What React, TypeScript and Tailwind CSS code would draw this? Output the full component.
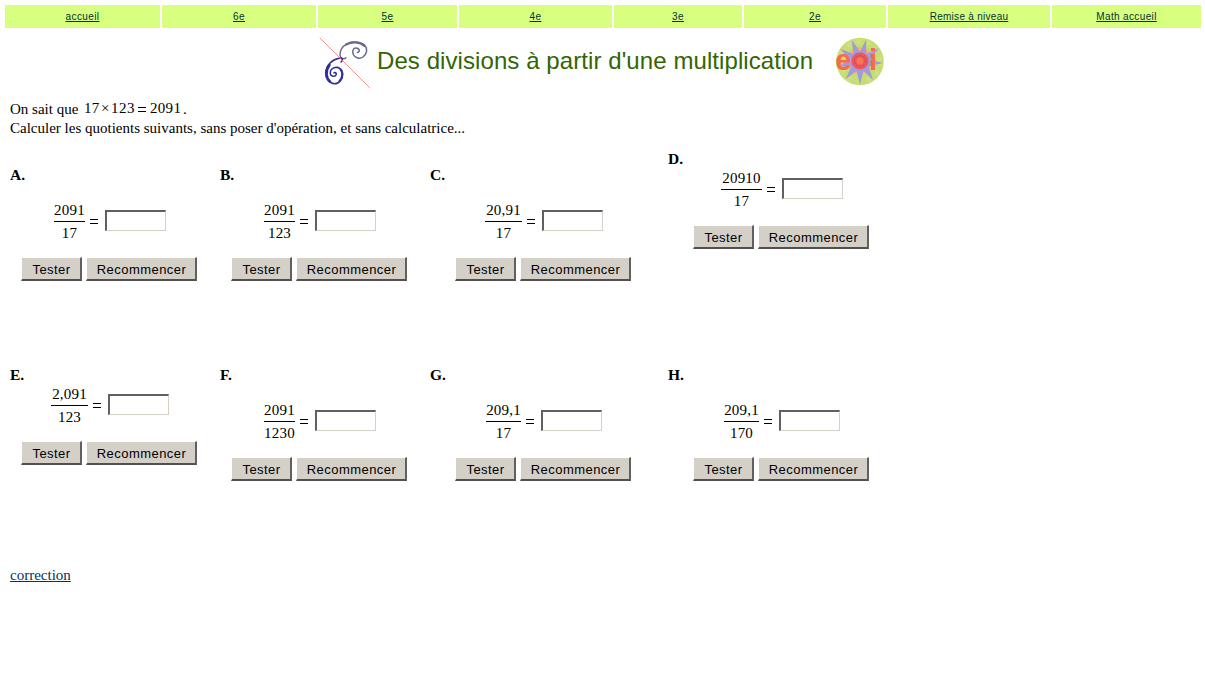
import React from "react";

const nav = [
  { label: "accueil", w: "w-[155px]", ls: "tracking-[0.4px]" },
  { label: "6e", w: "w-[154px]", ls: "tracking-[0.4px]" },
  { label: "5e", w: "w-[139px]", ls: "tracking-[0.4px]" },
  { label: "4e", w: "w-[153px]", ls: "tracking-[0.4px]" },
  { label: "3e", w: "w-[128px]", ls: "tracking-[0.4px]" },
  { label: "2e", w: "w-[142px]", ls: "tracking-[0.4px]" },
  { label: "Remise à niveau", w: "w-[162px]", ls: "tracking-[0.28px]" },
  { label: "Math accueil", w: "w-[149px]", ls: "tracking-[0.36px]" },
];

type Exercise = {
  id: string;
  num: string;
  den: string;
  gap: string;
  top: string;
  fracPad: string;
  btnPad: string;
  bar: string;
};

const exercises: Exercise[] = [
  { id: "A", num: "2091", den: "17", top: "pt-4", gap: "pt-4", fracPad: "pl-11", btnPad: "pl-[11px]", bar: "w-[31px]" },
  { id: "B", num: "2091", den: "123", top: "pt-4", gap: "pt-4", fracPad: "pl-11", btnPad: "pl-[11px]", bar: "w-[31px]" },
  { id: "C", num: "20,91", den: "17", top: "pt-4", gap: "pt-4", fracPad: "pl-[55px]", btnPad: "pl-[25px]", bar: "w-[37px]" },
  { id: "D", num: "20910", den: "17", top: "pt-0", gap: "pt-0", fracPad: "pl-[53px]", btnPad: "pl-[25px]", bar: "w-[41px]" },
  { id: "E", num: "2,091", den: "123", top: "pt-4", gap: "pt-0", fracPad: "pl-[41px]", btnPad: "pl-[11px]", bar: "w-[37px]" },
  { id: "F", num: "2091", den: "1230", top: "pt-4", gap: "pt-4", fracPad: "pl-11", btnPad: "pl-[11px]", bar: "w-[31px]" },
  { id: "G", num: "209,1", den: "17", top: "pt-4", gap: "pt-4", fracPad: "pl-14", btnPad: "pl-[25px]", bar: "w-[35px]" },
  { id: "H", num: "209,1", den: "170", top: "pt-4", gap: "pt-4", fracPad: "pl-14", btnPad: "pl-[25px]", bar: "w-[35px]" },
];

function ClassicButton({ label, w }: { label: string; w: string }) {
  return (
    <button
      className={`${w} h-6 border-t border-l border-r-2 border-b-2 border-t-white border-l-white border-r-[#606060] border-b-[#505050] bg-[#d4d0c8] pt-[2px] pl-px text-center font-['Liberation_Sans',sans-serif] text-[13px] leading-[19px] tracking-[0.45px] whitespace-nowrap text-black`}
    >
      {label}
    </button>
  );
}

function Equals() {
  return (
    <svg className="shrink-0" width="9" height="5" viewBox="0 0 9 5" shapeRendering="crispEdges">
      <path d="M1 0.5H9M1 4.5H9" stroke="#000" />
    </svg>
  );
}

function ExerciseCell({ ex }: { ex: Exercise }) {
  return (
    <div className={ex.top}>
      <div className="h-[19px] text-[15.5px] leading-[17px] font-bold">{ex.id}.</div>
      <div className={ex.gap}>
        <div className={`flex h-10 items-start ${ex.fracPad}`}>
          <div className={`${ex.bar} flex flex-col items-center text-[15px] tracking-[0.2px]`}>
            <span className="h-5 leading-[18px]">{ex.num}</span>
            <span className="h-px w-full bg-black" />
            <span className="h-[19px] leading-[22px]">{ex.den}</span>
          </div>
          <div className="flex pt-[18px] pl-1">
            <Equals />
          </div>
          <input
            aria-label={ex.id}
            className="mt-[9px] ml-[7px] h-[21px] w-[61px] border-t-2 border-r border-b border-l-2 border-t-[#606060] border-r-[#d4d0c8] border-b-[#d4d0c8] border-l-[#606060] bg-white outline-none"
          />
        </div>
        <div className={`flex gap-1 pt-4 ${ex.btnPad}`}>
          <ClassicButton label="Tester" w="w-[61px]" />
          <ClassicButton label="Recommencer" w="w-[111px]" />
        </div>
      </div>
    </div>
  );
}

function SixLogo() {
  return (
    <svg width="52" height="52" viewBox="0 0 52 52" fill="none" strokeLinecap="round">
      <path d="M27 20.700C25 22.500 21.500 22 21 18C21 13 24 9 27.300 7.300C33 4 42 4.500 45.700 8.300C49 12 48 17 44 20C41 22 36 21.500 34.300 17.500C33 14 34 11 37 11C40.500 11 41.500 15 38.500 15.500" stroke="#686890" strokeWidth="1.5" />
      <path d="M27 7.500C33 4.300 41 4.500 45.500 9" stroke="#686890" strokeWidth="2.2" />
      <path d="M22 25C24.500 23 23.500 20.500 20 21.200C13 22.500 7 28.500 6.700 35.700C6.700 42 10.500 46.700 15.700 46.700C20 46.700 24 42 23.700 36.500C23.500 32 19.500 29.800 16 30.500C12.500 31.200 11 34 11.300 36.500C11.800 40 16.500 40 17.200 37.500C17.500 35.800 16 35 15 35.800" stroke="#2f2f9c" strokeWidth="1.6" />
      <path d="M10.500 28C6 34 7 41.500 11 44.500" stroke="#2f2f9c" strokeWidth="2.6" />
      <path d="M20.500 44C24 40.500 24 35 21.500 32.500" stroke="#2f2f9c" strokeWidth="2" />
      <path d="M1 1L50.500 50.500" stroke="#f07878" strokeWidth="0.8" />
    </svg>
  );
}

function EoiLogo() {
  return (
    <svg width="50" height="50" viewBox="0 0 50 50">
      <circle cx="25" cy="24.500" r="23.800" fill="#c6dd72" />
      <circle cx="25" cy="24.500" r="20" fill="none" stroke="#cde082" strokeWidth="5" strokeDasharray="4 6" />
      <circle cx="25" cy="23.500" r="13.500" fill="#ffb45a" />
      <path
        d="M25 14.500L31 3L31.400 16.800L44 11L34.800 22.800L48 26L33.700 29.500L38 43L28.400 33.900L25 48L21.600 33.900L10.700 42L16.300 29.500L2 29.700L15.200 22.800L5 12L18.600 16.800L16.700 3Z"
        fill="#a09ae0"
      />
      <text x="0.200" y="32.500" fontFamily="Liberation Sans" fontSize="29" fontWeight="bold" fill="#f96a48">e</text>
      <text x="34" y="32.500" fontFamily="Liberation Sans" fontSize="29" fontWeight="bold" fill="#f96a48">i</text>
      <circle cx="25" cy="24" r="8.500" fill="#ee565a" />
      <circle cx="25" cy="24" r="5.500" fill="none" stroke="#d24a62" strokeWidth="1.2" strokeDasharray="2 1.500" />
      <circle cx="25" cy="24" r="3.500" fill="#f07a58" />
    </svg>
  );
}

export default function App() {
  return (
    <div className="h-[684px] w-[1205px] overflow-hidden bg-white font-['Liberation_Serif',serif] text-black">
      <nav className="flex h-7 gap-[2px] pt-[5px] pl-[5px]">
        {nav.map((n) => (
          <div key={n.label} className={`${n.w} flex h-[23px] shrink-0 items-center justify-center bg-[#d9ff80]`}>
            <a href="#" className={`${n.ls} font-['Liberation_Sans',sans-serif] text-[10px] leading-3 text-[#003333] underline`}>
              {n.label}
            </a>
          </div>
        ))}
      </nav>
      <header className="flex h-[72px] items-start pt-2 pl-[319px]">
        <div className="w-[58px] pt-px">
          <SixLogo />
        </div>
        <h1 className="w-[458px] pt-[10px] font-['Liberation_Sans',sans-serif] text-[24px] leading-[30px] tracking-[0.08px] whitespace-nowrap text-[#336600]">
          Des divisions à partir d'une multiplication
        </h1>
        <div className="pt-px">
          <EoiLogo />
        </div>
      </header>
      <main className="pl-[10px]">
        <div className="flex h-[19px] text-[15px] leading-[19px] whitespace-nowrap">
          <span className="w-[74px]">On sait que</span>
          <span className="w-[17px] leading-[17px] tracking-[0.3px]">17</span>
          <span className="w-[10px] leading-[17px]">×</span>
          <span className="w-[26px] leading-[17px] tracking-[0.5px]">123</span>
          <span className="w-[13px] pt-[7px]"><Equals /></span>
          <span className="w-[33px] leading-[17px] tracking-[0.3px]">2091</span>
          <span>.</span>
        </div>
        <p className="h-[31px] text-[15px] leading-[19px] whitespace-nowrap">
          Calculer les quotients suivants, sans poser d'opération, et sans calculatrice...
        </p>
        <div className="grid grid-cols-[210px_210px_238px_238px] grid-rows-[200px_200px]">
          {exercises.map((ex) => (
            <ExerciseCell key={ex.id} ex={ex} />
          ))}
        </div>
        <div className="pt-4 text-[15px] leading-[19px]">
          <a href="#" className="text-[#003366] underline">correction</a>
        </div>
      </main>
    </div>
  );
}
